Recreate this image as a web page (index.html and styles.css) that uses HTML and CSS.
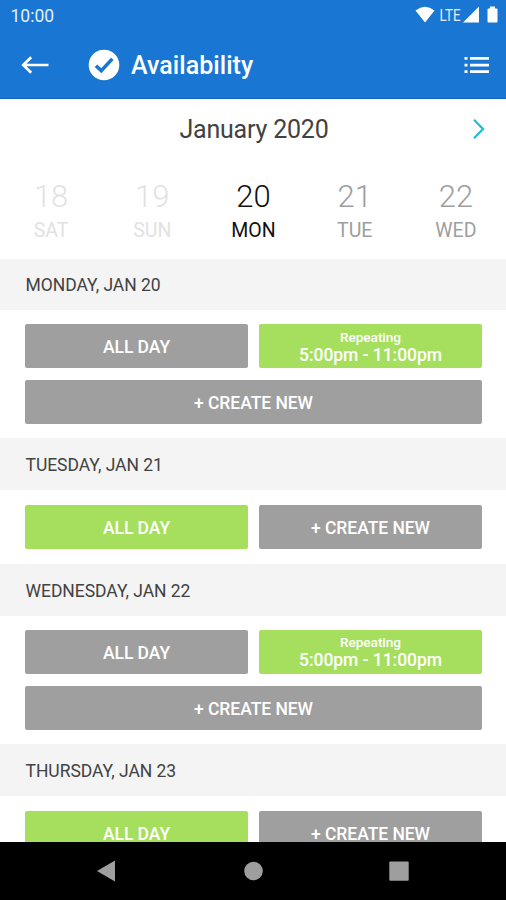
FILE: index.html
```html
<!DOCTYPE html>
<html lang="en">
<head>
    <meta charset="UTF-8">
    <meta name="viewport" content="width=device-width, initial-scale=1.0">
    <title>Availability</title>
    <link rel="stylesheet" href="styles.css">
</head>
<body>
    <div class="screen">
        <header class="header">
            <div class="status-bar">
                <span class="clock">10:00</span>
                <svg class="status-icons" width="84" height="20" viewBox="0 0 84 20">
                    <path d="M0.5 5.5Q10 -1.8 19.5 5.5L10 17.5Z" fill="#fff"/>
                    <text class="lte" x="24.5" y="15.6" textLength="21" lengthAdjust="spacingAndGlyphs">LTE</text>
                    <path d="M64 1.5V17.5H48Z" fill="#fff"/>
                    <path d="M75 1.5h5v2h1.500q1 0 1 1V16.500q0 1-1 1h-8q-1 0-1-1V4.500q0-1 1-1H75z" fill="#fff"/>
                </svg>
            </div>
            <div class="app-bar">
                <svg class="back" width="28" height="18" viewBox="0 0 28 18" fill="none" stroke="#fff" stroke-width="2.700">
                    <path d="M27.500 9H2M10.200 1.200L2.200 9l8 7.800"/>
                </svg>
                <svg class="check" width="32" height="32" viewBox="0 0 32 32">
                    <circle cx="16" cy="16" r="15.300" fill="#fff"/>
                    <path d="M8 16.700l5.300 5.100L24.300 9.900" fill="none" stroke="#1976d2" stroke-width="3.600"/>
                </svg>
                <h1>Availability</h1>
                <svg class="menu" width="26" height="18" viewBox="0 0 26 18" fill="#fff">
                    <path d="M0.500 1h3v2.700h-3zM6 1h19v2.700H6zM0.500 7.700h3v2.700h-3zM6 7.700h19v2.700H6zM0.500 14.300h3V17h-3zM6 14.300h19V17H6z"/>
                </svg>
            </div>
        </header>

        <div class="month">
            <span class="month-name">January 2020</span>
            <svg class="next" width="14" height="22" viewBox="0 0 14 22" fill="none" stroke="#26b9d9" stroke-width="2.300">
                <path d="M2 1.800L11 11L2 20.200"/>
            </svg>
        </div>

        <div class="week">
            <div class="date past"><span class="num">18</span><span class="name">SAT</span></div>
            <div class="date past"><span class="num">19</span><span class="name">SUN</span></div>
            <div class="date current"><span class="num">20</span><span class="name">MON</span></div>
            <div class="date"><span class="num">21</span><span class="name">TUE</span></div>
            <div class="date"><span class="num">22</span><span class="name">WED</span></div>
        </div>

        <main class="days">
            <h2 class="first">MONDAY, JAN 20</h2>
            <div class="slots">
                <button class="slot">ALL DAY</button>
                <button class="slot available"><small>Repeating</small><span class="time">5:00pm - 11:00pm</span></button>
                <button class="slot wide">+ CREATE NEW</button>
            </div>

            <h2>TUESDAY, JAN 21</h2>
            <div class="slots single">
                <button class="slot available">ALL DAY</button>
                <button class="slot">+ CREATE NEW</button>
            </div>

            <h2>WEDNESDAY, JAN 22</h2>
            <div class="slots">
                <button class="slot">ALL DAY</button>
                <button class="slot available"><small>Repeating</small><span class="time">5:00pm - 11:00pm</span></button>
                <button class="slot wide">+ CREATE NEW</button>
            </div>

            <h2>THURSDAY, JAN 23</h2>
            <div class="slots single">
                <button class="slot available">ALL DAY</button>
                <button class="slot">+ CREATE NEW</button>
            </div>
        </main>

        <nav class="nav-bar">
            <svg width="20" height="22" viewBox="0 0 20 22" fill="#9e9e9e"><path d="M1 11L19 0.500V21.500Z"/></svg>
            <svg width="20" height="22" viewBox="0 0 20 22" fill="#9e9e9e"><circle cx="10.500" cy="11" r="9.300"/></svg>
            <svg width="20" height="22" viewBox="0 0 20 22" fill="#9e9e9e"><rect x="0.300" y="1.500" width="19.400" height="19.200" rx="1"/></svg>
        </nav>
    </div>
</body>
</html>
```

FILE: styles.css
```css
body {
    margin: 0;
    font-family: Roboto, "Liberation Sans", sans-serif;
    background-color: #fff;
    color: #424242;
}
.screen {
    display: flex;
    flex-direction: column;
    height: 900px;
    overflow: hidden;
}
.header {
    flex: none;
    box-sizing: border-box;
    height: 99px;
    background-color: #1976d2;
    border-bottom: 1px solid #1565c0;
    color: #fff;
}
.status-bar {
    display: flex;
    justify-content: space-between;
    align-items: center;
    height: 31px;
    padding: 0 7px 0 10.5px;
}
.clock {
    font-size: 17.5px;
    color: #e3effa;
}
.status-icons {
    margin-top: -1px;
}
.lte {
    font-size: 16px;
    fill: #e3effa;
}
.app-bar {
    display: flex;
    align-items: center;
    height: 68px;
    padding: 0 16px 0 21px;
}
.back {
    margin-right: 39px;
}
.check {
    margin-right: 11px;
}
h1 {
    margin: 0;
    padding-top: 1px;
    font-size: 25px;
    font-weight: 500;
    letter-spacing: 0.05px;
}
.menu {
    margin-left: auto;
}
.month {
    display: flex;
    flex: none;
    align-items: center;
    height: 60px;
    padding: 0 20px 0 34px;
}
.month-name {
    flex: 1;
    font-size: 25px;
    letter-spacing: -0.2px;
    text-align: center;
    padding-left: 2px;
}
.week {
    display: grid;
    flex: none;
    grid-template-columns: repeat(5, 1fr);
    height: 100px;
}
.date {
    display: flex;
    flex-direction: column;
    align-items: center;
    padding: 19px 0 0 1px;
    color: #9e9e9e;
}
.date.past {
    color: #e2e2e2;
}
.date.current {
    color: #111;
}
.num {
    font-size: 31px;
    font-weight: 300;
    line-height: 38px;
}
.name {
    font-size: 19.5px;
    line-height: 30px;
}
.days {
    flex: 1;
    min-height: 0;
    overflow: hidden;
}
h2 {
    margin: 0;
    padding-left: 25.5px;
    height: 52px;
    line-height: 54px;
    background-color: #f4f4f4;
    font-size: 17.5px;
    font-weight: 400;
    letter-spacing: -0.04px;
}
h2.first {
    height: 51px;
    line-height: 52px;
}
.slots {
    display: grid;
    grid-template-columns: 1fr 1fr;
    gap: 11.6px 11px;
    padding: 14px 24px 14px 25px;
}
.slots.single {
    padding-top: 15px;
    padding-bottom: 14.3px;
}
.slot {
    display: flex;
    flex-direction: column;
    align-items: center;
    justify-content: center;
    height: 44.3px;
    padding: 1.5px 0 0;
    border: none;
    border-radius: 2px;
    background-color: #9f9f9f;
    color: #fff;
    font-family: inherit;
    font-size: 17.5px;
    font-weight: 500;
    letter-spacing: -0.05px;
}
.slots.single .slot {
    padding-top: 1px;
}
.slot.available {
    background-color: #a6df5e;
}
.slot.wide {
    grid-column: 1 / 3;
}
.slot small {
    font-size: 13.6px;
    line-height: 17px;
}
.time {
    line-height: 18px;
}
.slot:has(small) {
    padding-top: 0;
}
.nav-bar {
    display: flex;
    flex: none;
    justify-content: space-between;
    box-sizing: border-box;
    height: 58px;
    padding: 18px 97px 0 96px;
    background-color: #000;
}
```
